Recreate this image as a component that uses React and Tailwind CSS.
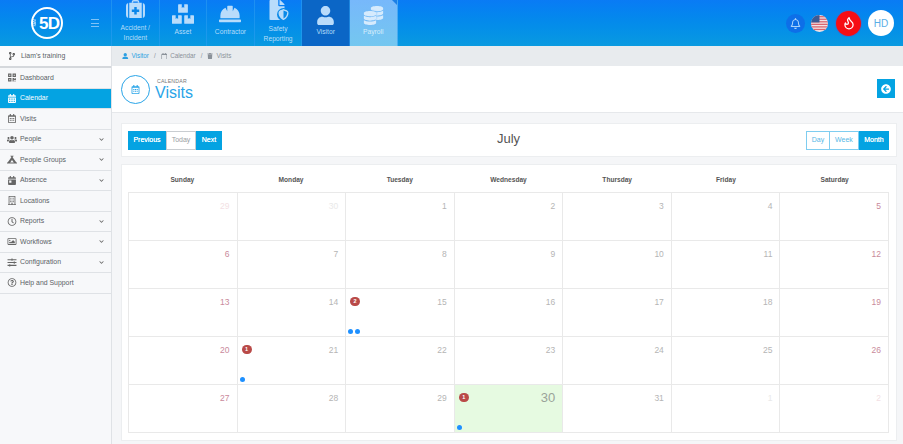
import React from "react";
import { FaBoxes, FaHardHat, FaFile, FaShieldAlt, FaUser, FaCodeBranch, FaQrcode, FaRegCalendarAlt, FaCalendarAlt, FaUsers, FaCampground, FaCalendarDay, FaRegBuilding, FaRegClock, FaRegImage, FaSlidersH, FaRegQuestionCircle, FaChevronDown, FaRegBell, FaRegCalendar, FaTrash, FaArrowCircleLeft, FaDatabase } from "react-icons/fa";
import { Flame } from "lucide-react";

function Nav({ label, active, payroll, children }) {
  return (
    <div className={"flex h-full w-[47.6px] shrink-0 flex-col items-center justify-start border-r border-[#2b9cf0]/60 text-center leading-[10px] " + (active ? "bg-[#0b66c6] " : "") + (payroll ? "relative bg-gradient-to-b from-[#77b8fb] to-[#74c7ef] " : "")}>
      <div className="flex h-[25px] items-end justify-center text-[#b9dcfb]">{children}</div>
      <div className={"flex flex-1 items-center pb-[7px] text-[6.7px] " + (payroll ? "text-[#d8eefb]" : "text-[#b5dcf9]")}>{label}</div>
      {payroll && <div className="absolute right-0 top-0 h-0 w-0 border-l-[5px] border-t-[5px] border-l-transparent border-t-[#1b7fe6]" />}
    </div>
  );
}

const side = [
  [FaQrcode, "Dashboard"],
  [FaCalendarAlt, "Calendar", false, true],
  [FaRegCalendarAlt, "Visits"],
  [FaUsers, "People", true],
  [FaCampground, "People Groups", true],
  [FaCalendarDay, "Absence", true],
  [FaRegBuilding, "Locations"],
  [FaRegClock, "Reports", true],
  [FaRegImage, "Workflows", true],
  [FaSlidersH, "Configuration", true],
  [FaRegQuestionCircle, "Help and Support"],
];

const weeks = [
  [29, 30, 1, 2, 3, 4, 5],
  [6, 7, 8, 9, 10, 11, 12],
  [13, 14, 15, 16, 17, 18, 19],
  [20, 21, 22, 23, 24, 25, 26],
  [27, 28, 29, 30, 31, 1, 2],
];
const days = ["Sunday", "Monday", "Tuesday", "Wednesday", "Thursday", "Friday", "Saturday"];

function Cell({ r, c, n }) {
  const muted = (r === 0 && c < 2) || (r === 4 && c > 4);
  const today = r === 4 && c === 3;
  const weekend = c === 0 || c === 6;
  const badge = r === 2 && c === 2 ? 2 : r === 3 && c === 1 ? 1 : today ? 1 : 0;
  const color = muted ? (weekend ? "text-[#f3dfe4]" : "text-[#e9e9e9]") : weekend ? "text-[#c98a9b]" : "text-[#b5b5b5]";
  return (
    <div className={"relative border-b border-r border-[#e9e9e9] " + (today ? "bg-[#e6fae1]" : "bg-white")}>
      <div className={"absolute right-[7px] top-[7px] leading-[12px] " + (today ? "text-[13px] text-[#9aa39a]" : "text-[8.5px] " + color)}>{n}</div>
      {badge > 0 && (
        <div className="absolute left-[4px] top-[8px] flex h-[9px] w-[10px] items-center justify-center rounded-full bg-[#b94a48] text-[5.5px] font-bold leading-none text-white">{badge}</div>
      )}
      {badge > 0 && (
        <div className="absolute bottom-[2px] left-[2px] flex gap-[2px]">
          {Array.from({ length: badge }).map((_, i) => (
            <div key={i} className="h-[5px] w-[5px] rounded-full bg-[#1e90ff]" />
          ))}
        </div>
      )}
    </div>
  );
}

export default function App() {
  return (
    <div className="flex h-[444px] w-[903px] flex-col overflow-hidden bg-[#f5f6f8] text-[#555]" style={{ fontFamily: '"Liberation Sans", Arial, sans-serif' }}>
      <header className="flex h-[46px] shrink-0 items-stretch bg-gradient-to-b from-[#0a7bf5] to-[#0a9ae0]">
        <div className="flex w-[112px] shrink-0 items-center border-r border-[#2b9cf0]/60">
          <div className="ml-[31px] flex h-[32px] w-[32px] items-center justify-center rounded-full border-2 border-white bg-transparent text-white">
            <span className="mr-[1px] rotate-180 text-[3.5px] leading-none [writing-mode:vertical-rl]">SAM</span>
            <span className="text-[17px] font-bold leading-none tracking-[-0.5px]">5D</span>
          </div>
          <div className="ml-[28px] flex w-[8px] flex-col gap-[2.5px]">
            <div className="h-px bg-[#7fc2f7]" /><div className="h-px bg-[#7fc2f7]" /><div className="h-px bg-[#7fc2f7]" />
          </div>
        </div>
        <Nav label={<span>Accident /<br />Incident</span>}>
          <svg viewBox="0 0 20 19" className="mb-[5px] h-[18px] w-[19px]" fill="currentColor">
            <path d="M6 3V2a2 2 0 0 1 2-2h4a2 2 0 0 1 2 2v1h-1.6V1.6H7.6V3z" />
            <path d="M0 6a3 3 0 0 1 2.2-2.9V19A3 3 0 0 1 0 16zM3.4 3h13.2v16H3.4zM17.8 3.1A3 3 0 0 1 20 6v10a3 3 0 0 1-2.2 3z" />
            <path d="M8.7 7.5h2.6v2.6h2.6v2.6h-2.6v2.6H8.7v-2.6H6.1v-2.6h2.6z" fill="#0a86ea" />
          </svg>
        </Nav>
        <Nav label="Asset"><FaBoxes className="text-[22px]" /></Nav>
        <Nav label="Contractor"><FaHardHat className="text-[22px]" /></Nav>
        <Nav label={<span>Safety<br />Reporting</span>}>
          <span className="relative mb-[3px] block h-[21px] w-[22px]">
            <FaFile className="absolute left-[0px] top-0 text-[20px]" />
            <FaShieldAlt className="absolute bottom-[0px] right-[-1px] rounded-full bg-[#0a8ae8] p-[1px] text-[13px]" />
          </span>
        </Nav>
        <Nav label="Visitor" active><FaUser className="text-[19px]" /></Nav>
        <Nav label="Payroll" payroll>
          <span className="relative block h-[19px] w-[20px] text-[#d6ebfd]">
            <FaDatabase className="absolute right-[-1px] top-0 text-[14px]" />
            <FaDatabase className="absolute bottom-0 left-0 text-[14px] drop-shadow-[0_0_1px_#74b8f5]" />
          </span>
        </Nav>
        <div className="flex flex-1 items-center justify-end pr-[9px]">
          <div className="flex h-[19px] w-[19px] items-center justify-center rounded-full bg-[#0d6fe8] text-[#a9d3fb]"><FaRegBell className="text-[11px]" /></div>
          <div className="ml-[6px] h-[17px] w-[17px] overflow-hidden rounded-full">
            <svg viewBox="0 0 16 16" className="h-full w-full">
              <rect width="16" height="16" fill="#f3e4e6" />
              {[1, 3.4, 5.8, 8.2, 10.6, 13].map((y) => <rect key={y} y={y} width="16" height="1.2" fill="#d9656f" />)}
              <rect width="8" height="7" fill="#3b5a94" />
            </svg>
          </div>
          <div className="ml-[8px] flex h-[25px] w-[25px] items-center justify-center rounded-full bg-[#f60d14] text-white shadow-[0_0_0_1px_#2a74d8]"><Flame size={14} strokeWidth={2.2} /></div>
          <div className="ml-[7px] flex h-[26px] w-[26px] items-center justify-center rounded-full bg-white text-[10px] text-[#5aaee6]">HD</div>
        </div>
      </header>

      <div className="flex min-h-0 flex-1">
        <aside className="w-[112px] shrink-0 border-r border-[#dfe2e6] bg-[#f7f8fa] text-[6.9px] text-[#5a5f66]">
          <div className="flex h-[22px] items-center border-b-2 border-[#d5d8dc] bg-[#fbfbfc] pl-[8px]">
            <FaCodeBranch className="w-[8px] text-[8px] text-[#555]" />
            <span className="ml-[5px]">Liam's training</span>
          </div>
          {side.map(([Icon, label, chev, active]) => (
            <div key={label} className={"flex h-[20.5px] items-center border-b border-[#dfe2e6] pl-[7px] " + (active ? "bg-[#04a3e2] text-white" : "")}>
              <Icon className={"w-[10px] text-[9px] " + (active ? "text-white" : "text-[#666]")} />
              <span className="ml-[3px]">{label}</span>
              {chev && <FaChevronDown className="ml-auto mr-[7px] text-[5px] text-[#666]" />}
            </div>
          ))}
        </aside>

        <main className="min-w-0 flex-1">
          <div className="flex h-[20px] items-center gap-[3px] bg-[#e8ebee] pl-[10px] text-[6.3px] text-[#8a9199]">
            <FaUser className="text-[6.5px] text-[#2c9fe2]" /><span className="text-[#2c9fe2]">Visitor</span>
            <span className="mx-[2px]">/</span>
            <FaRegCalendar className="text-[6.5px]" /><span>Calendar</span>
            <span className="mx-[2px]">/</span>
            <FaTrash className="text-[6px]" /><span>Visits</span>
          </div>
          <div className="flex h-[47px] items-center border-b border-[#e6e8eb] bg-white pl-[9px] pr-[8px]">
            <div className="flex h-[29px] w-[29px] items-center justify-center rounded-full border border-[#2aa5e8] text-[#2aa5e8]"><FaRegCalendarAlt className="text-[9px]" /></div>
            <div className="ml-[5px] pt-[1px]">
              <div className="ml-[2px] text-[5.2px] leading-[6px] tracking-[0.2px] text-[#777]">CALENDAR</div>
              <div className="text-[16px] leading-[17px] text-[#2aa5e8]">Visits</div>
            </div>
            <div className="ml-auto mb-[1px] flex h-[19px] w-[18px] items-center justify-center bg-[#04a3e2] text-white"><FaArrowCircleLeft className="text-[10px]" /></div>
          </div>

          <section className="ml-[9px] mr-[6px] mt-[10px] flex h-[34px] items-center border border-[#eceef0] bg-white pl-[6px] pr-[7px]">
            <div className="flex h-[19px] w-1/3 text-[7px]">
              <div className="flex w-[38px] items-center justify-center bg-[#04a3e2] text-white [text-shadow:0_0_0.4px_#fff]">Previous</div>
              <div className="flex w-[30px] items-center justify-center border border-[#c9cdd1] text-[#9a9ea3]">Today</div>
              <div className="flex w-[26px] items-center justify-center bg-[#04a3e2] text-white [text-shadow:0_0_0.4px_#fff]">Next</div>
            </div>
            <div className="w-1/3 pb-[3px] text-center text-[13px] text-[#555]">July</div>
            <div className="flex h-[19px] w-1/3 justify-end text-[7px]">
              <div className="flex w-[24px] items-center justify-center border border-[#7fcdf0] text-[#57b8e6]">Day</div>
              <div className="flex w-[29px] items-center justify-center border-y border-r border-[#7fcdf0] text-[#57b8e6]">Week</div>
              <div className="flex w-[30px] items-center justify-center bg-[#04a3e2] text-white [text-shadow:0_0_0.4px_#fff]">Month</div>
            </div>
          </section>

          <section className="ml-[9px] mr-[6px] mt-[7px] border border-[#eceef0] bg-white pb-[7px] pl-[6px] pr-[7px]">
            <div className="grid h-[27px] grid-cols-7 items-center pt-[2px] text-center text-[6.6px] font-bold text-[#555]">
              {days.map((d) => <div key={d}>{d}</div>)}
            </div>
            <div className="grid h-[241px] grid-cols-7 grid-rows-5 border-l border-t border-[#e9e9e9]">
              {weeks.map((w, r) => w.map((n, c) => <Cell key={r + "-" + c} r={r} c={c} n={n} />))}
            </div>
          </section>
        </main>
      </div>
    </div>
  );
}
